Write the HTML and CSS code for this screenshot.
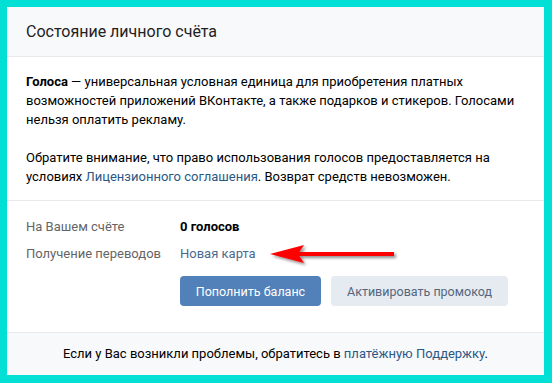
FILE: index.html
```html
<!DOCTYPE html>
<html lang="ru">
<head>
    <meta charset="UTF-8">
    <title>Состояние личного счёта</title>
    <link rel="stylesheet" href="styles.css">
</head>
<body>
    <div class="panel">
        <div class="panel-header">Состояние личного счёта</div>

        <div class="panel-info">
            <p><b>Голоса</b> — универсальная условная единица для приобретения платных возможностей приложений ВКонтакте, а также подарков и стикеров. Голосами нельзя оплатить рекламу.</p>
            <p>Обратите внимание, что право использования голосов предоставляется на условиях <a href="#">Лицензионного соглашения</a>. Возврат средств невозможен.</p>
        </div>

        <div class="panel-balance">
            <div class="row">
                <div class="row-label">На Вашем счёте</div>
                <div class="row-value bold">0 голосов</div>
            </div>
            <div class="row">
                <div class="row-label">Получение переводов</div>
                <div class="row-value"><a href="#">Новая карта</a></div>
            </div>
            <div class="button-group">
                <button class="btn btn-primary">Пополнить баланс</button>
                <button class="btn btn-secondary">Активировать промокод</button>
            </div>

            <!-- red pointer drawn over the screenshot -->
            <svg class="pointer" width="140" height="30" viewBox="0 0 140 30">
                <defs>
                    <filter id="shadow" x="-10%" y="-50%" width="130%" height="200%">
                        <feDropShadow dx="2" dy="2" stdDeviation="1.5" flood-color="#000" flood-opacity="0.45"/>
                    </filter>
                </defs>
                <g filter="url(#shadow)">
                    <rect x="28" y="11" width="98" height="4" fill="#f00"/>
                    <path d="M2 13 L36 4 L30 13 L36 22 Z" fill="#f00"/>
                </g>
            </svg>
        </div>

        <div class="panel-footer">
            Если у Вас возникли проблемы, обратитесь в <a href="#">платёжную Поддержку</a>.
        </div>
    </div>
</body>
</html>
```

FILE: styles.css
```css
* {
    margin: 0;
    padding: 0;
    box-sizing: border-box;
}

body {
    background: #02dfd4;
    padding: 7px 8px 8px 7px;
    font-family: Roboto, 'Open Sans', sans-serif;
    font-size: 13px;
    color: #000;
}

a {
    color: #2a5885;
    text-decoration: none;
}

.panel {
    background: white;
    height: 368px;
    display: flex;
    flex-direction: column;
}

.panel-header {
    height: 50px;
    line-height: 49px;
    padding: 0 19px;
    background: #f8f9fb;
    border-bottom: 1px solid #e7e8ec;
    font-size: 16px;
    color: #222;
}

.panel-info {
    padding: 15px 19px 14px;
    line-height: 19px;
    border-bottom: 1px solid #e7e8ec;
}

.panel-info p + p {
    margin-top: 19px;
}

.panel-balance {
    position: relative;
    padding: 16px 19px 26px;
    flex: 1;
}

.row {
    display: flex;
    height: 27px;
    line-height: 19px;
}

.row-label {
    width: 154px;
    color: #656565;
}

.row-value a {
    color: #4a6a8f;
}

.bold {
    font-weight: 700;
}

.button-group {
    display: flex;
    gap: 10px;
    margin-top: 5px;
    padding-left: 154px;
}

.btn {
    height: 30px;
    padding: 0;
    border: none;
    border-radius: 4px;
    font-family: inherit;
    font-size: 12.5px;
    white-space: nowrap;
}

.btn-primary {
    background: #5181b8;
    color: white;
    width: 141px;
}

.btn-secondary {
    background: #e5ebf1;
    color: #55677d;
    width: 177px;
}

.pointer {
    position: absolute;
    left: 261px;
    top: 40px;
}

.panel-footer {
    height: 43px;
    line-height: 42px;
    border-top: 1px solid #e7e8ec;
    background: #f8f9fb;
    text-align: center;
}
```
